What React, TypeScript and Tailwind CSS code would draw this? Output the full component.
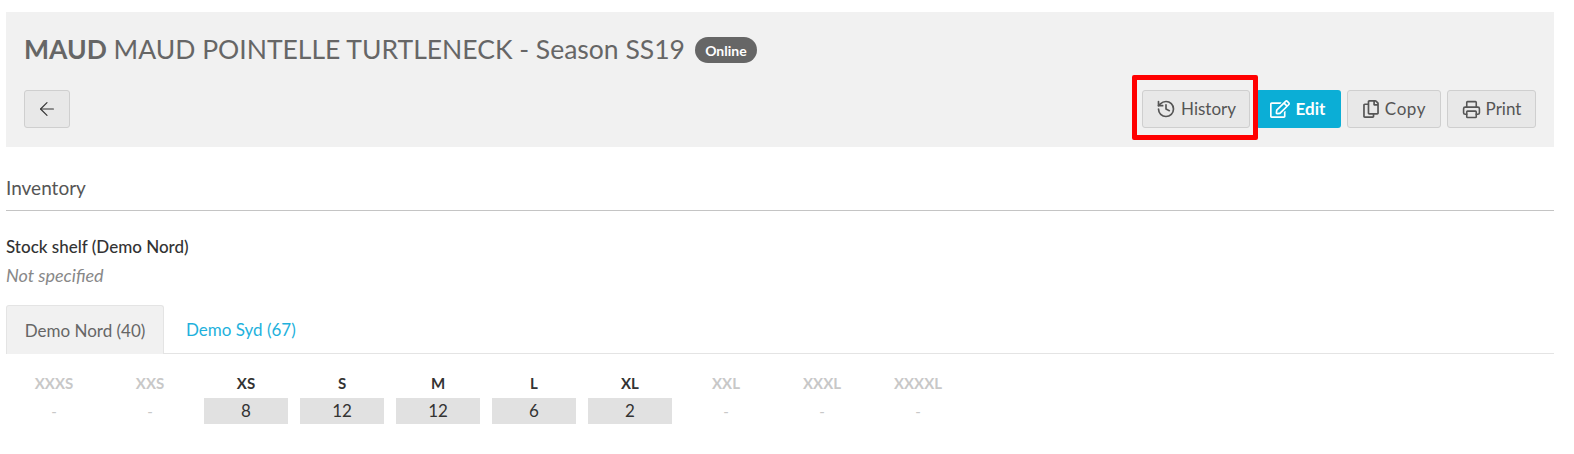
import { ArrowLeft, History, Printer } from "lucide-react";
import { FaRegCopy, FaRegEdit } from "react-icons/fa";
import type { ReactNode } from "react";

const sizes = [
  { label: "XXXS", qty: null },
  { label: "XXS", qty: null },
  { label: "XS", qty: 8 },
  { label: "S", qty: 12 },
  { label: "M", qty: 12 },
  { label: "L", qty: 6 },
  { label: "XL", qty: 2 },
  { label: "XXL", qty: null },
  { label: "XXXL", qty: null },
  { label: "XXXXL", qty: null },
];

function ToolButton({ icon, children, className }: { icon: ReactNode; children: ReactNode; className: string }) {
  return (
    <button className={`flex h-[38px] items-center justify-center gap-[5px] rounded-[3px] border border-[#cfcfcf] bg-[#e8e8e8] text-[17px] text-[#555] ${className}`}>
      {icon}
      {children}
    </button>
  );
}

export default function App() {
  return (
    <div className="relative min-h-[454px] bg-white pt-3 pr-5 pl-[6px] font-['Lato',sans-serif]">
      <header className="h-[135px] bg-[#f1f1f1] px-[18px] pt-[25px]">
        <div className="flex h-[26px] items-center gap-[10px]">
          <h1 className="text-[26.5px] whitespace-nowrap text-[#666]">
            <span className="font-bold">MAUD</span> MAUD POINTELLE TURTLENECK - Season SS19
          </h1>
          <span className="flex h-[26px] w-[62px] items-center justify-center rounded-full bg-[#666] text-[14px] font-bold text-white">
            Online
          </span>
        </div>
        <div className="mt-[27px] flex items-center justify-between">
          <button className="flex h-[38px] w-[46px] items-center justify-center rounded-[3px] border border-[#cfcfcf] bg-[#e8e8e8] text-[#333]">
            <ArrowLeft size={22} strokeWidth={1.25} />
          </button>
          <div className="flex items-center">
            <ToolButton className="w-[108px]" icon={<History size={20} strokeWidth={2} />}>
              History
            </ToolButton>
            <button className="ml-[6px] flex h-[38px] w-[85px] items-center justify-center gap-[6px] rounded-[3px] bg-[#0baed6] pr-[2px] text-[17px] font-bold text-white">
              <FaRegEdit size={20} />
              Edit
            </button>
            <ToolButton className="ml-[6px] w-[94px] tracking-[0.6px]" icon={<FaRegCopy size={18} />}>
              Copy
            </ToolButton>
            <ToolButton className="ml-[6px] w-[89px]" icon={<Printer size={19} strokeWidth={2} />}>
              Print
            </ToolButton>
          </div>
        </div>
      </header>

      <h2 className="mt-[28px] text-[19px] leading-[26px] text-[#555]">Inventory</h2>
      <hr className="mt-[9px] border-[#c4c4c4]" />

      <p className="mt-[26px] text-[17px] leading-5 font-medium text-[#333]">Stock shelf (Demo Nord)</p>
      <p className="mt-[8px] text-[18px] leading-5 text-[#888] italic">Not specified</p>

      <div className="mt-[20px] flex h-[49px] border-b border-[#e4e4e4]">
        <div className="flex h-[49px] w-[158px] items-center justify-center rounded-t-[3px] border border-b-0 border-[#e4e4e4] bg-[#f1f1f1] pt-[1px] text-[17px] text-[#666]">
          Demo Nord (40)
        </div>
        <div className="ml-[22px] flex h-[48px] items-center pt-[1px] text-[17px] text-[#1eb1dc]">Demo Syd (67)</div>
      </div>

      <div className="mt-[19px] flex gap-3 pl-[6px]">
        {sizes.map((s) => (
          <div key={s.label} className="w-[84px] text-center">
            <div className={`text-[15px] leading-5 font-bold ${s.qty === null ? "text-[#c8c8c8]" : "text-[#333]"}`}>
              {s.label}
            </div>
            {s.qty === null ? (
              <div className="mt-[5px] h-[26px] text-[15px] leading-[26px] text-[#c8c8c8]">-</div>
            ) : (
              <div className="mt-[5px] h-[26px] bg-[#e1e1e1] text-[17px] leading-[26px] text-[#333]">{s.qty}</div>
            )}
          </div>
        ))}
      </div>

      {/* annotation drawn over the screenshot */}
      <div className="absolute top-[75px] left-[1132px] h-[65px] w-[126px] rounded-[2px] border-[5px] border-[#ff0000]" />
    </div>
  );
}
